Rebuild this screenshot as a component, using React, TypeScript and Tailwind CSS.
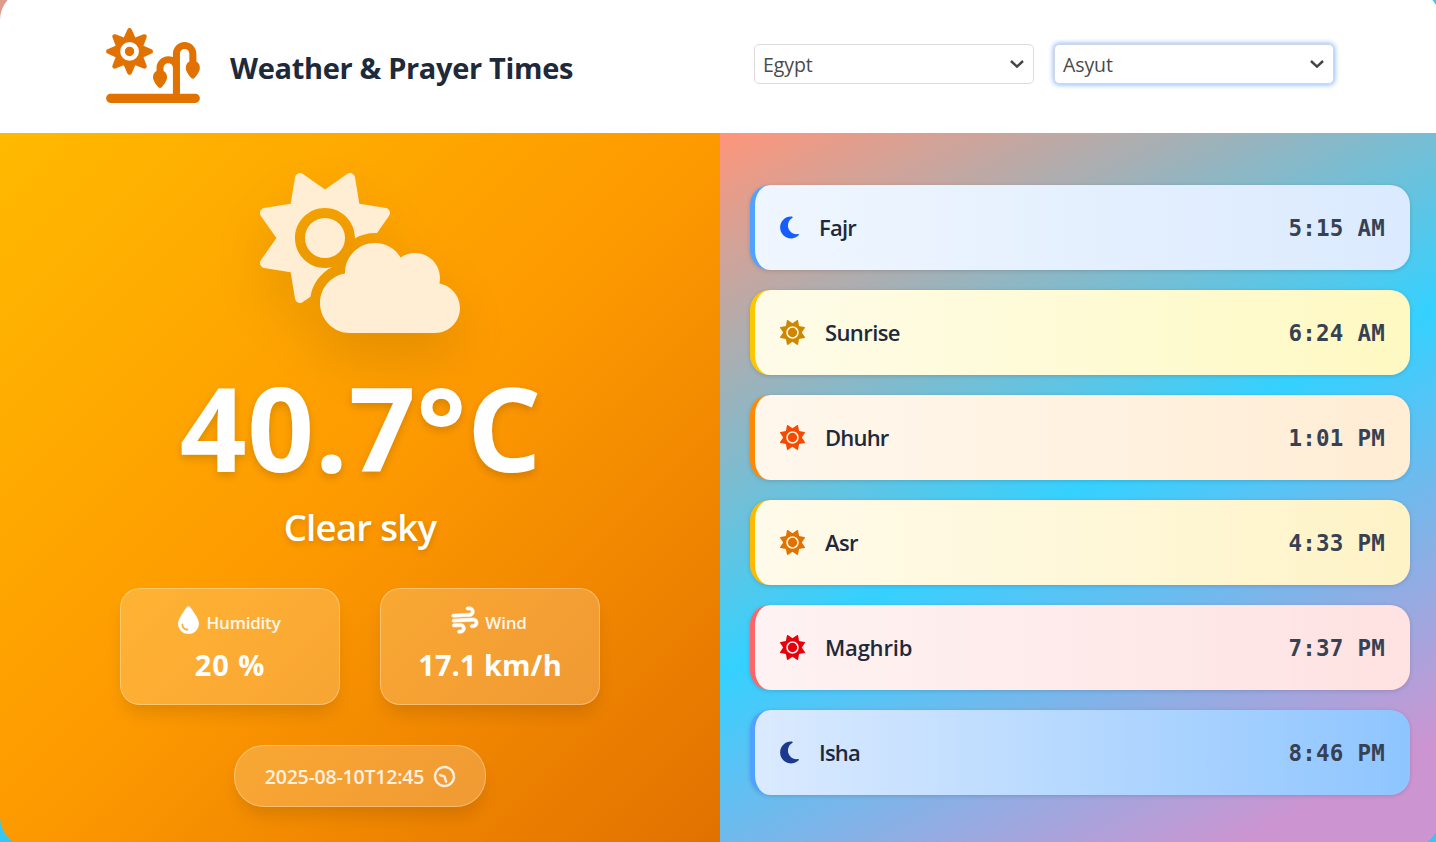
import type { IconType } from "react-icons";
import {
  FaCloudSun,
  FaDroplet,
  FaMoon,
  FaRegClock,
  FaSun,
  FaSunPlantWilt,
  FaWind,
} from "react-icons/fa6";

type Prayer = { name: string; time: string; icon: IconType; row: string; iconStyle: string; track: string };

const prayers: Prayer[] = [
  { name: "Fajr", time: "5:15 AM", icon: FaMoon, row: "from-blue-50 to-blue-100 border-blue-400", iconStyle: "w-[19px] text-blue-600", track: "tracking-[-0.8px]" },
  { name: "Sunrise", time: "6:24 AM", icon: FaSun, row: "from-yellow-50 to-yellow-100 border-yellow-400", iconStyle: "w-[25px] text-yellow-600", track: "tracking-[-0.6px]" },
  { name: "Dhuhr", time: "1:01 PM", icon: FaSun, row: "from-orange-50 to-orange-100 border-orange-400", iconStyle: "w-[25px] text-orange-600", track: "tracking-[-0.8px]" },
  { name: "Asr", time: "4:33 PM", icon: FaSun, row: "from-amber-50 to-amber-100 border-amber-400", iconStyle: "w-[25px] text-amber-600", track: "tracking-[-0.6px]" },
  { name: "Maghrib", time: "7:37 PM", icon: FaSun, row: "from-red-50 to-red-100 border-red-400", iconStyle: "w-[25px] text-red-600", track: "tracking-[-0.2px]" },
  { name: "Isha", time: "8:46 PM", icon: FaMoon, row: "from-blue-100 to-blue-300 border-blue-400", iconStyle: "w-[19px] text-blue-900", track: "tracking-[-0.8px]" },
];

function Select({ value, focused }: { value: string; focused?: boolean }) {
  return (
    <button
      className={
        "flex h-10 w-[280px] items-center justify-between rounded-[5px] border bg-white pr-[9px] pl-2 text-[19.5px] text-[#4a4a4a] " +
        (focused ? "border-[#d0d6e2] shadow-[0_0_5px_1px_#8fbcff]" : "border-[#dcdcdc]")
      }
    >
      <span className="pt-[3px] tracking-[-0.1px]">{value}</span>
      <svg viewBox="0 0 14 10" className="h-[10px] w-[14px]" fill="none" stroke="#444" strokeWidth="2.4">
        <path d="M1 2l6 5.6L13 2" />
      </svg>
    </button>
  );
}

function Header() {
  return (
    <header className="flex h-[143px] shrink-0 items-center bg-white pl-[106px]">
      <FaSunPlantWilt className="mt-[8px] h-[75px] w-[94px] text-amber-600" />
      <h1 className="mt-[12px] ml-[30px] w-[524px] text-[29px] font-bold tracking-[-0.33px] text-gray-800">
        Weather &amp; Prayer Times
      </h1>
      <div className="mt-1 flex gap-5">
        <Select value="Egypt" />
        <Select value="Asyut" focused />
      </div>
    </header>
  );
}

function Stat({ icon: Icon, iconStyle, label, value, track }: { icon: IconType; iconStyle: string; label: string; value: string; track: string }) {
  return (
    <div className="flex h-[117px] w-[220px] flex-col items-center rounded-[20px] border border-white/30 bg-white/20 pt-[17px] shadow-[0_12px_18px_-4px_rgba(0,0,0,0.12)]">
      <div className="flex h-7 items-center gap-[7px] pr-[1px]">
        <Icon className={iconStyle} />
        <span className="pt-[5px] text-[17px] font-semibold tracking-[-0.2px] text-white/90">{label}</span>
      </div>
      <div className={`mt-[11px] text-[29px] leading-10 font-bold ${track}`}>{value}</div>
    </div>
  );
}

function Weather() {
  return (
    <section className="flex w-[720px] flex-col items-center bg-linear-to-br from-amber-400 via-amber-500 to-amber-600 pt-10 text-white">
      <FaCloudSun className="h-[160px] w-[200px] text-[#ffeed3] drop-shadow-[0_25px_25px_rgba(0,0,0,0.1)]" />
      <div className="mt-[34px] h-[120px] pl-[2px] text-[117px] leading-[120px] font-bold tracking-[0.6px] whitespace-nowrap [text-shadow:0_4px_8px_rgba(0,0,0,0.15)]">
        40.7°C
      </div>
      <div className="mt-[15px] h-[50px] text-[36.5px] leading-[50px] font-semibold tracking-[-0.7px] [text-shadow:0_3px_6px_rgba(0,0,0,0.15)]">
        Clear sky
      </div>
      <div className="mt-[36px] flex gap-10">
        <Stat icon={FaDroplet} iconStyle="h-7 w-[21px]" label="Humidity" value="20 %" track="tracking-[0.9px]" />
        <Stat icon={FaWind} iconStyle="h-[26px] w-[26px] -rotate-3 stroke-current stroke-[10px] overflow-visible" label="Wind" value="17.1 km/h" track="tracking-[0.05px]" />
      </div>
      <div className="mt-10 flex h-[62px] w-[252px] items-center justify-center gap-[10px] rounded-[30px] border border-white/30 bg-white/20 text-white/85 shadow-[0_12px_18px_-4px_rgba(0,0,0,0.12)]">
        <span className="pt-[1px] text-[19.5px] font-semibold tracking-[-0.2px]">2025-08-10T12:45</span>
        <FaRegClock className="h-[21px] w-[21px] rotate-[163deg] overflow-visible stroke-current stroke-[10px]" />
      </div>
    </section>
  );
}

function Prayers() {
  return (
    <section className="flex w-[720px] flex-col gap-5 bg-[linear-gradient(153deg,#ff957a_0%,#35d1ff_50%,#cc95d1_90%)] pt-[52px] pr-[30px] pl-[30px]">
      {prayers.map(({ name, time, icon: Icon, row, iconStyle, track }) => (
        <div
          key={name}
          className={`flex h-[85px] items-center rounded-[20px] border-l-[5px] bg-linear-to-r px-[25px] shadow-[0_1px_4px_rgba(0,0,0,0.15)] ${row}`}
        >
          <Icon className={`h-[25px] ${iconStyle}`} />
          <span className={`ml-5 text-[22px] font-semibold text-gray-800 ${track}`}>{name}</span>
          <span className="ml-auto pt-[2px] font-['DejaVu_Sans_Mono',monospace] text-[22.5px] font-bold tracking-[0.25px] text-gray-700">
            {time}
          </span>
        </div>
      ))}
    </section>
  );
}

export default function App() {
  return (
    <div className="h-[842px] w-[1436px] overflow-hidden bg-[linear-gradient(153deg,#e09a8c_0%,#35c8f5_50%)] font-['Open_Sans','Noto_Sans',sans-serif]">
      <div className="-mt-[10px] flex h-[857px] w-[1440px] flex-col overflow-hidden rounded-[30px]">
        <Header />
        <main className="flex flex-1">
          <Weather />
          <Prayers />
        </main>
      </div>
    </div>
  );
}
